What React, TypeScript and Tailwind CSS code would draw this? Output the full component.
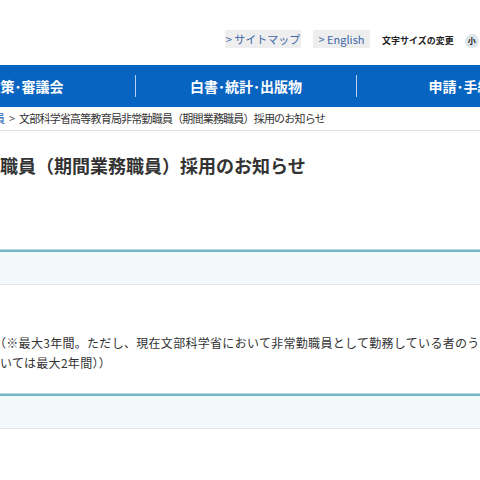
import React from "react";

function Band() {
  return (
    <div>
      <div className="h-px bg-[#b3dbe4]" />
      <div className="h-[2px] bg-[#78b6c6]" />
      <div className="h-[33px] bg-[#f2f9fb] border-b border-[#e1e6e7]" />
    </div>
  );
}

export default function App() {
  return (
    <div className="w-[480px] h-[480px] overflow-hidden bg-white font-['Noto_Sans_CJK_JP',sans-serif] text-[#333333]">
      {/* header */}
      <div className="h-[65px] flex items-start pt-[30px] pl-[225px] whitespace-nowrap">
        <div className="h-[18px] w-[76px] shrink-0 bg-[#eeeeee] flex items-center justify-center text-[11px] text-[#3b68a6] leading-none">
          &gt; サイトマップ
        </div>
        <div className="h-[18px] w-[57px] ml-[12px] shrink-0 bg-[#eeeeee] flex items-center justify-center text-[11px] text-[#3b68a6] leading-none">
          &gt; English
        </div>
        <div className="ml-[12px] h-[18px] mt-[2px] flex items-center text-[9px] font-bold text-[#222222] shrink-0">
          文字サイズの変更
        </div>
        <div className="ml-[11px] mt-[4px] w-[14px] h-[14px] shrink-0 rounded-full bg-[#dde6e9] flex items-center justify-center text-[8px] font-bold text-[#222222] leading-none">
          小
        </div>
      </div>

      {/* global nav */}
      <div className="h-[42px] bg-[#0864c1] flex items-center -ml-[85px] whitespace-nowrap text-white font-bold text-[14px]">
        <div className="w-[220px] shrink-0 flex justify-center">政策･審議会</div>
        <div className="w-px h-[22px] bg-white/70 shrink-0" />
        <div className="w-[220px] shrink-0 flex justify-center">白書･統計･出版物</div>
        <div className="w-px h-[22px] bg-white/70 shrink-0" />
        <div className="w-[220px] shrink-0 flex justify-center">申請･手続き</div>
      </div>

      {/* breadcrumb */}
      <div className="h-[24px] border-b border-[#e0e0e0] flex items-center whitespace-nowrap text-[11px] leading-none">
        <span className="-ml-[6px] text-[#1b5fb3]">員</span>
        <span className="mx-[4px] text-[#555555]">&gt;</span>
        <span className="text-[#333333] tracking-[-0.8px]">文部科学省高等教育局非常勤職員（期間業務職員）採用のお知らせ</span>
      </div>

      {/* title */}
      <div className="pt-[24px] -ml-[234px] whitespace-nowrap text-[18px] leading-[20px] font-bold text-[#333333]">
        文部科学省高等教育局非常勤職員（期間業務職員）採用のお知らせ
      </div>

      <div className="mt-[74px]">
        <Band />
      </div>

      <div className="pt-[48px] text-[12px] leading-[20px] whitespace-nowrap text-[#333333] tracking-[0.3px]">
        <div className="-ml-[6px]">（※最大3年間。ただし、現在文部科学省において非常勤職員として勤務している者のうち、</div>
        <div>いては最大2年間））</div>
      </div>

      <div className="mt-[20px]">
        <Band />
      </div>

      <div className="mt-[51px]">
        <div className="h-px bg-[#b3dbe4]" />
        <div className="h-[2px] bg-[#78b6c6]" />
      </div>
    </div>
  );
}
